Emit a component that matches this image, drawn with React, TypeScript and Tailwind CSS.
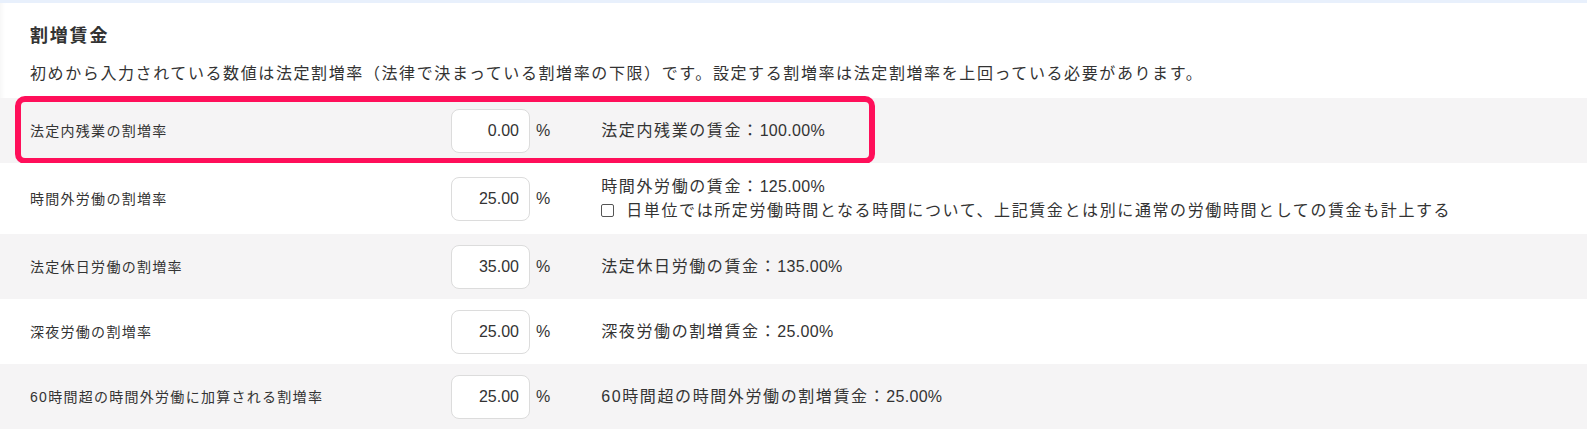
const rows = [
  { label: "法定内残業の割増率", value: "0.00", result: "法定内残業の賃金：", rate: "100.00%", gray: true, highlight: true },
  { label: "時間外労働の割増率", value: "25.00", result: "時間外労働の賃金：", rate: "125.00%", gray: false, check: true },
  { label: "法定休日労働の割増率", value: "35.00", result: "法定休日労働の賃金：", rate: "135.00%", gray: true },
  { label: "深夜労働の割増率", value: "25.00", result: "深夜労働の割増賃金：", rate: "25.00%", gray: false },
  { label: "60時間超の時間外労働に加算される割増率", value: "25.00", result: "60時間超の時間外労働の割増賃金：", rate: "25.00%", gray: true },
];

const App = () => {
  return (
    <div
      className="min-h-[432px] w-full bg-white text-[#333] tracking-[0.08em]"
      style={{ fontFamily: '"Liberation Sans", "Noto Sans CJK JP", sans-serif' }}
    >
      <div className="h-[3px] bg-[#e8f0fc]" />
      <div className="shadow-[inset_5px_0_4px_-3px_rgba(0,0,0,0.04)]">
        <h2 className="pl-[30px] pt-[19px] text-[18px] leading-[28px] font-bold tracking-[0.1em]">割増賃金</h2>
        <p className="mt-[12px] pl-[30px] text-[16px] leading-[24px] tracking-[0.1em]">
          初めから入力されている数値は法定割増率（法律で決まっている割増率の下限）です。設定する割増率は法定割増率を上回っている必要があります。
        </p>
        <div className="mt-[12px] flex flex-col">
          {rows.map((r) => (
            <div
              key={r.label}
              className={`relative flex items-center pl-[30px] ${r.check ? "h-[71px]" : "h-[65px]"} ${r.gray ? "bg-[#f5f4f5]" : "bg-white"}`}
            >
              <div className="w-[421px] text-[14px] leading-[20px]">{r.label}</div>
              <div className="flex h-[44px] w-[79px] items-center justify-end rounded-[8px] border border-[#dcdcdc] bg-white pr-[10px] text-[16px] tracking-normal">
                {r.value}
              </div>
              <span className="ml-[6px] text-[16px] tracking-normal">%</span>
              <div className="ml-[51px] flex flex-col text-[16px] leading-[24px] tracking-[0.1em]">
                <span>
                  {r.result}
                  <span className="tracking-[0.02em]">{r.rate}</span>
                </span>
                {r.check && (
                  <label className="flex items-center">
                    <span className="mr-[12px] h-[13px] w-[13px] rounded-[2px] border border-[#555] bg-white" />
                    日単位では所定労働時間となる時間について、上記賃金とは別に通常の労働時間としての賃金も計上する
                  </label>
                )}
              </div>
              {r.highlight && (
                <div className="pointer-events-none absolute left-[15px] top-[-2px] h-[68px] w-[860px] rounded-[10px] border-[6px] border-[#ff0f5a]" />
              )}
            </div>
          ))}
        </div>
      </div>
    </div>
  );
};

export default App;
